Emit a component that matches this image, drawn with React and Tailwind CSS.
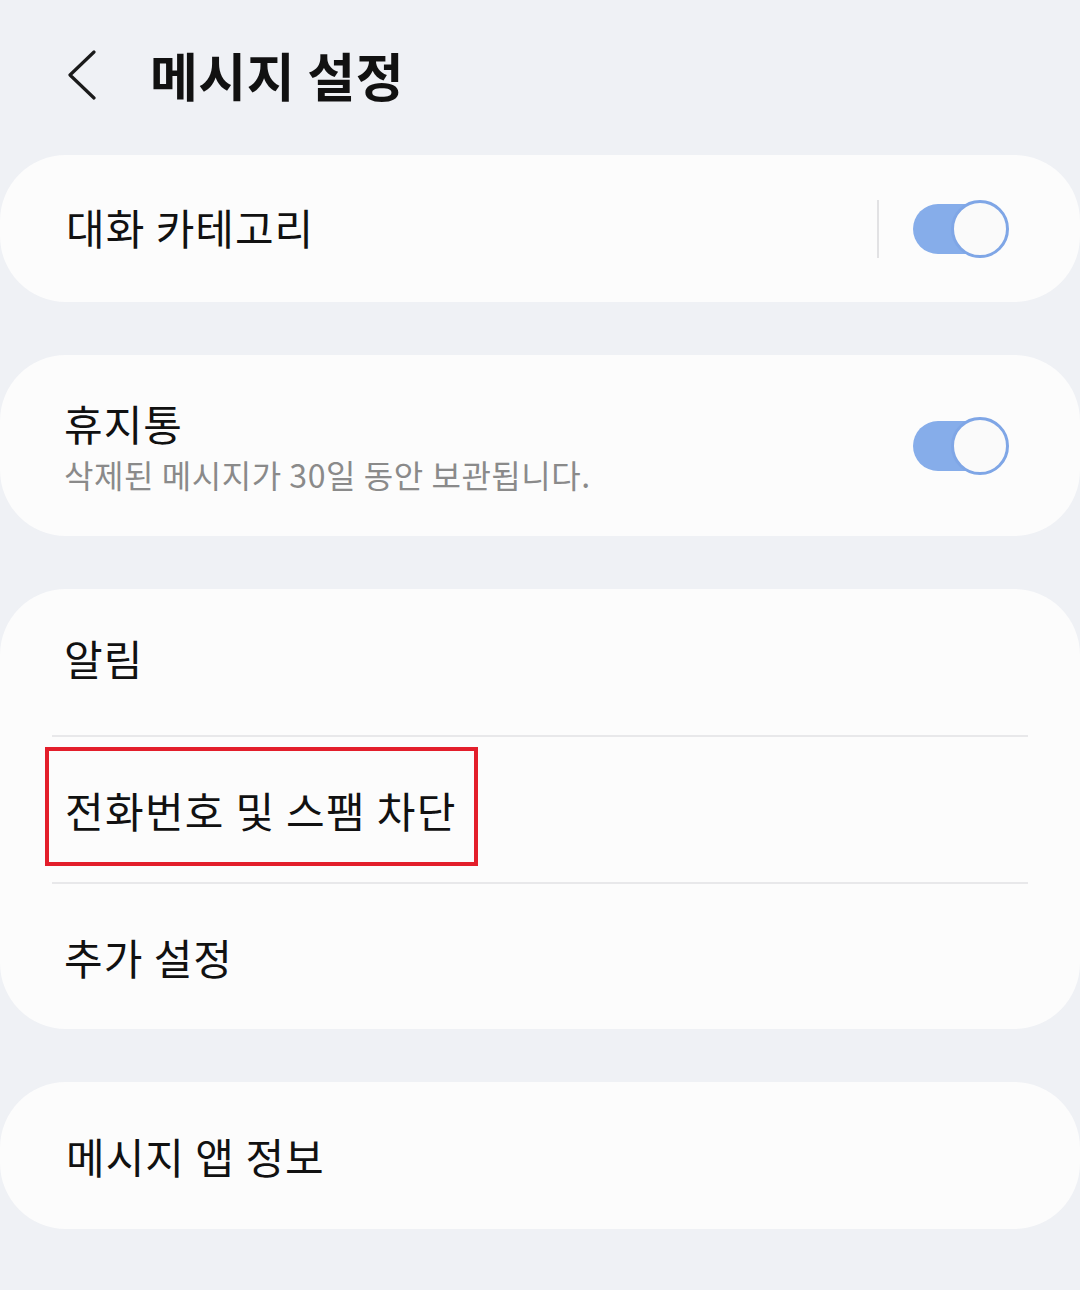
import React from 'react';

const font = { fontFamily: '"Noto Sans CJK KR", "Noto Sans", sans-serif' };

function Toggle() {
  return (
    <div className="relative w-[96px] h-[58px] flex items-center">
      <div className="w-[80px] h-[50px] rounded-full bg-[#86adea]" />
      <div className="absolute right-0 top-0 w-[58px] h-[58px] rounded-full bg-[#fafafa] border-[3px] border-[#7fa6e6]" />
    </div>
  );
}

function Divider() {
  return <div className="mx-[52px] h-[2px] bg-[#e8e8ea]" />;
}

export default function App() {
  return (
    <div className="w-[1080px] h-[1290px] bg-[#eff1f5] text-[#111]" style={font}>
      {/* Header */}
      <div className="h-[155px] flex items-center pl-[68px] pb-[6px]">
        <svg width="30" height="52" viewBox="0 0 30 52" className="mr-[52px]">
          <polyline points="26,3 2,26 26,49" fill="none" stroke="#1a1a1a" strokeWidth="3.2" strokeLinecap="round" strokeLinejoin="round" />
        </svg>
        <h1 className="text-[52px] font-bold tracking-[0.5px] leading-none">메시지 설정</h1>
      </div>

      <div className="flex flex-col gap-[53px]">
        {/* 대화 카테고리 */}
        <div className="h-[147px] bg-[#fcfcfc] rounded-[66px] flex items-center pl-[66px] pr-[71px]">
          <span className="flex-1 text-[42px] tracking-[1px] leading-none pb-[4px]">대화 카테고리</span>
          <div className="w-[2px] h-[58px] bg-[#e2e2e4] mr-[34px]" />
          <Toggle />
        </div>

        {/* 휴지통 */}
        <div className="h-[181px] bg-[#fcfcfc] rounded-[66px] flex items-center pl-[64px] pr-[71px]">
          <div className="flex-1 flex flex-col gap-[14px]">
            <span className="text-[42px] tracking-[1px] leading-none">휴지통</span>
            <span className="text-[32px] text-[#8a8a8a] tracking-[0.55px] leading-none">삭제된 메시지가 30일 동안 보관됩니다.</span>
          </div>
          <Toggle />
        </div>

        {/* 알림 group */}
        <div className="bg-[#fcfcfc] rounded-[66px] flex flex-col">
          <div className="h-[146px] flex items-center pl-[64px]">
            <span className="text-[42px] tracking-[1px] leading-none pb-[8px]">알림</span>
          </div>
          <Divider />
          <div className="relative h-[145px] flex items-center pl-[65px]">
            <span className="text-[42px] tracking-[1.3px] leading-none">전화번호 및 스팸 차단</span>
            <div className="absolute left-[45px] top-[10px] w-[433px] h-[119px] border-[4px] border-[#e31e2b]" />
          </div>
          <Divider />
          <div className="h-[145px] flex items-center pl-[64px]">
            <span className="text-[42px] tracking-[1px] leading-none">추가 설정</span>
          </div>
        </div>

        {/* 메시지 앱 정보 */}
        <div className="h-[147px] bg-[#fcfcfc] rounded-[66px] flex items-center pl-[66px]">
          <span className="text-[42px] tracking-[1px] leading-none">메시지 앱 정보</span>
        </div>
      </div>
    </div>
  );
}
